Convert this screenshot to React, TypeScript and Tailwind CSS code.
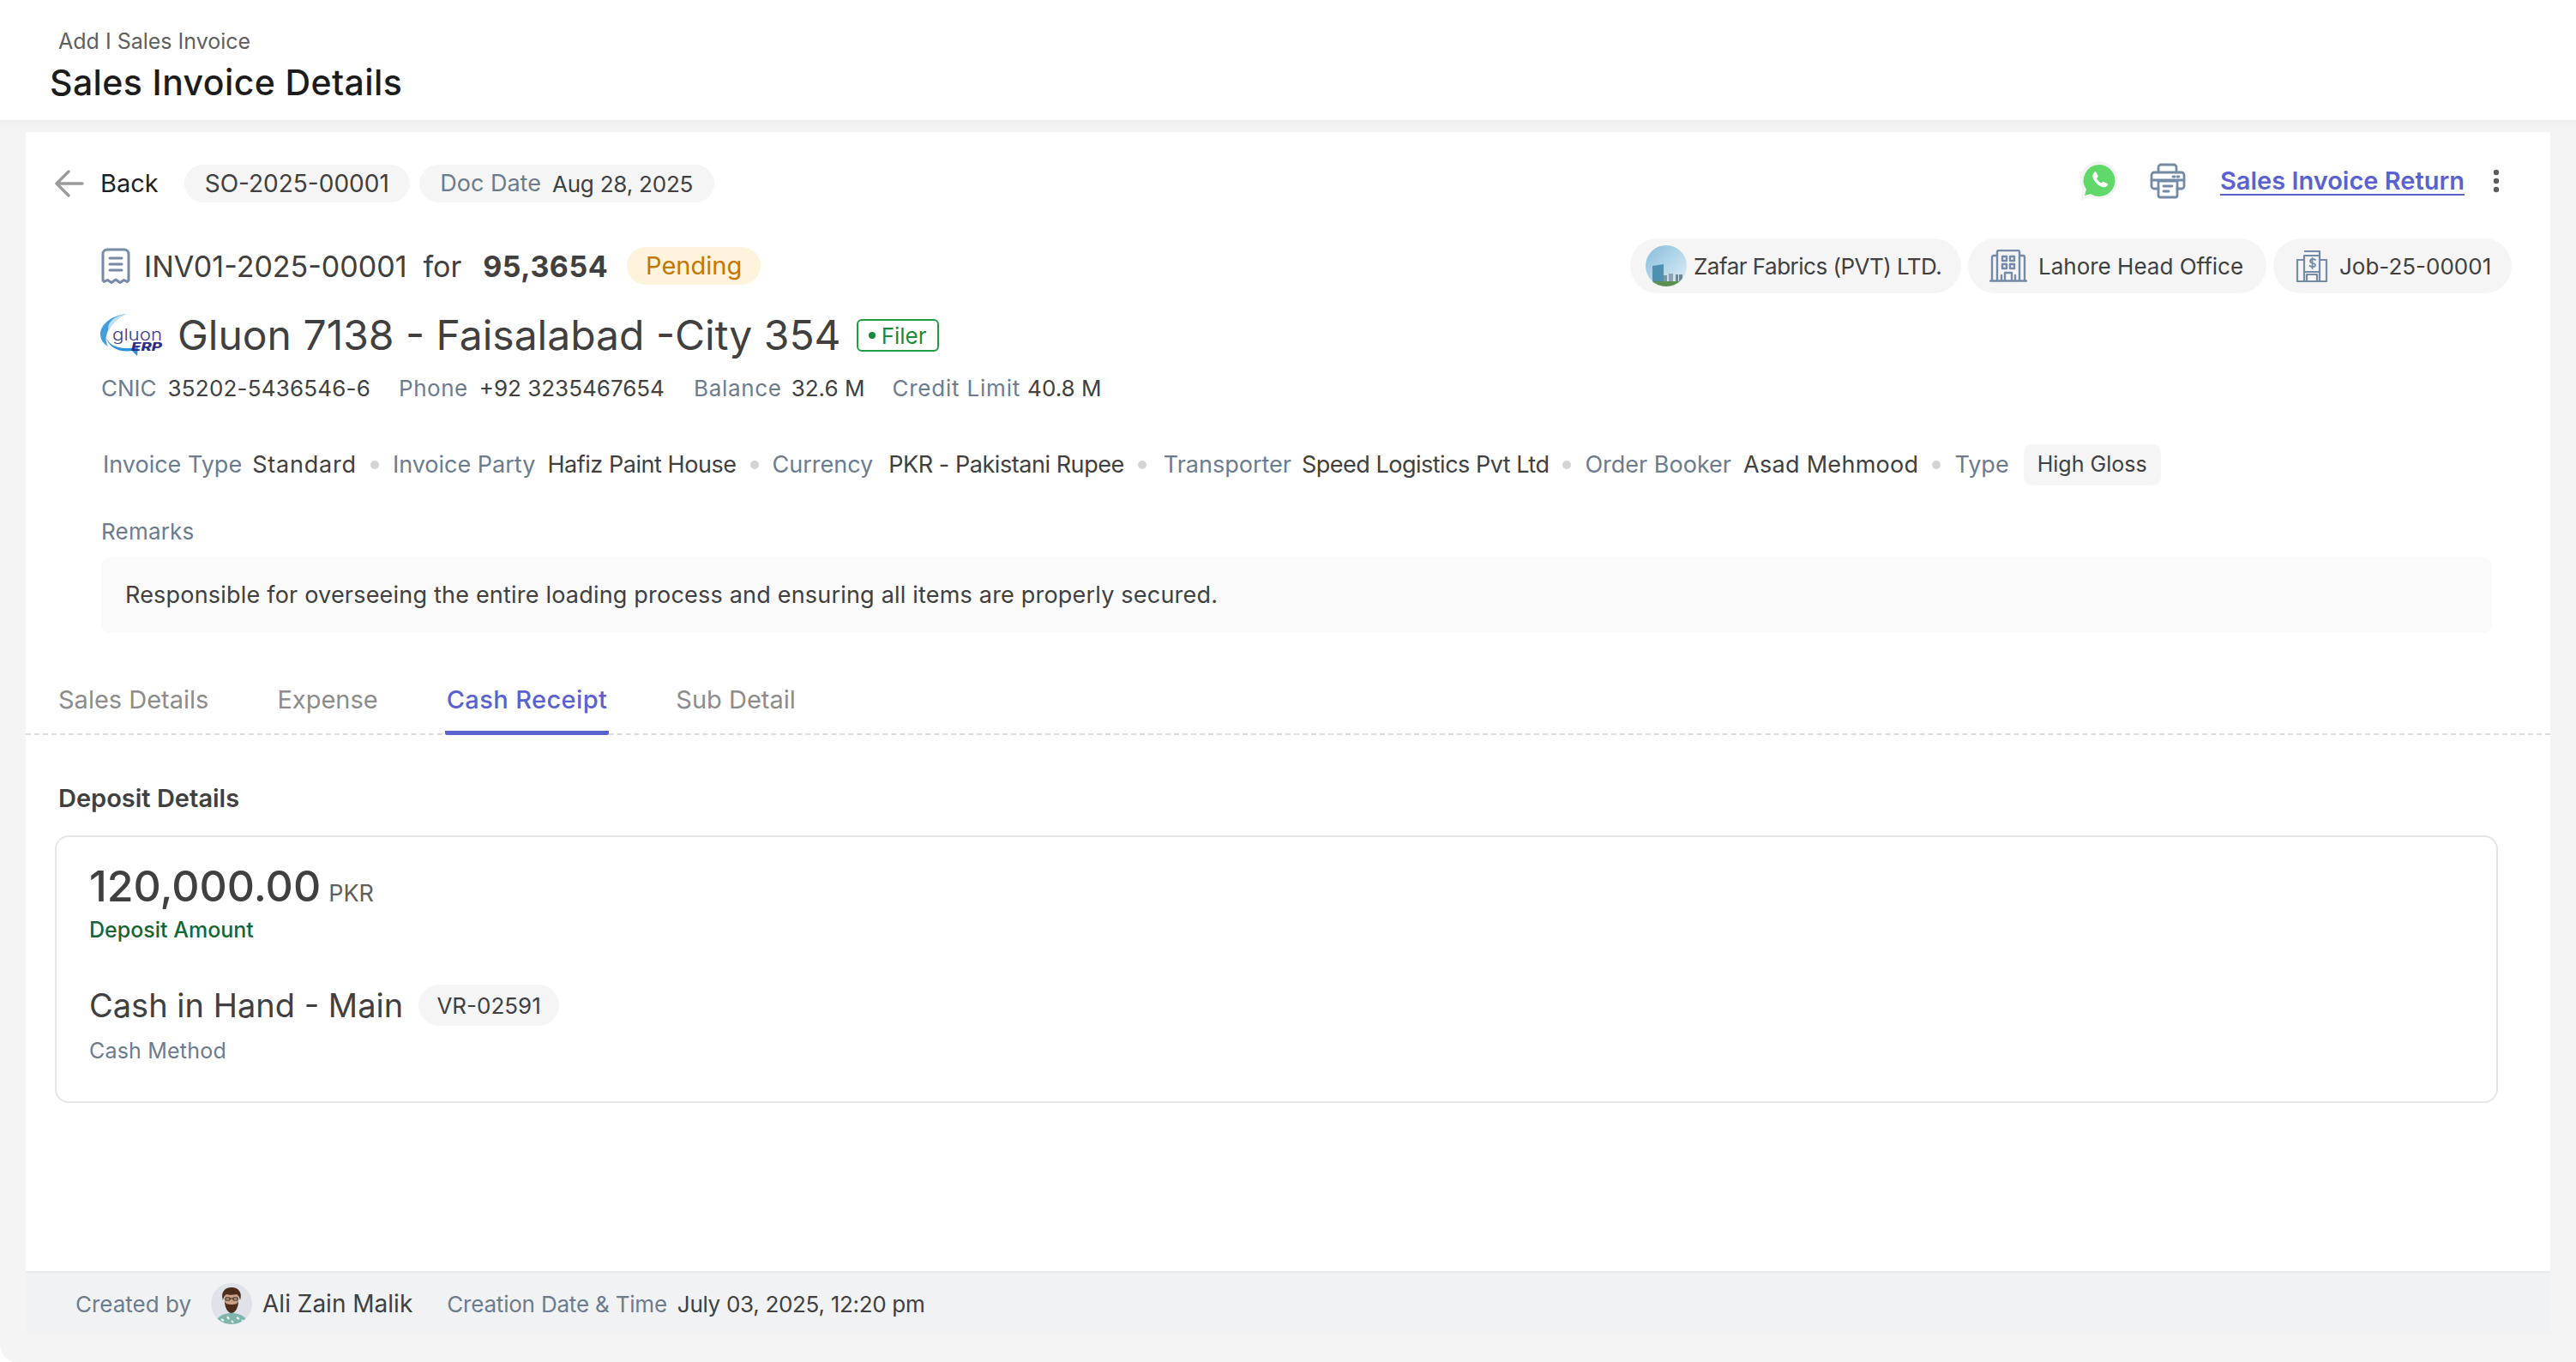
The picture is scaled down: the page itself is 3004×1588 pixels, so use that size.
const FONT = 'font-["Inter","Noto_Sans",sans-serif]'

function ArrowIcon() {
  return (
    <svg width="34" height="32" viewBox="0 0 34 32" fill="none" stroke="#9b9b9b" strokeWidth="3.4" strokeLinecap="round" strokeLinejoin="round">
      <path d="M2 16h30M16 2 2 16l14 14" />
    </svg>
  )
}

function ReceiptIcon() {
  return (
    <svg width="34" height="42" viewBox="0 0 34 42" fill="none" stroke="#748aa6" strokeWidth="3" strokeLinecap="round" strokeLinejoin="round">
      <path d="M7 2h20a5 5 0 0 1 5 5v31l-1.500 1.500-4-2-4.500 3-5-3.500-5 3.500-4.500-3-4 2L2 38V7a5 5 0 0 1 5-5Z" />
      <path d="M10 12h14M10 19h14M10 26h14" />
    </svg>
  )
}

function GluonLogo() {
  return (
    <svg width="74" height="50" viewBox="0 0 74 50">
      <path d="M30 0C13 2 0 12 0 24c0 6 4 11 9 14-3-5-3-11-1-16C11 12 20 4 30 0Z" fill="#3f9fe0" />
      <path d="M30 0C22 1 14 5 10 12c-1 3-1 5 0 8 3-8 11-15 20-20Z" fill="#bde2f8" />
      <path d="M6 26c3 9 12 14 24 14 5 0 10-.5 14-1.500l-1 10.500-6-6c-15 2-27-3-31-17Z" fill="#2b92dc" />
      <text x="14" y="31" fontSize="18.500" fontWeight="300" fill="#3d3a8c" fontFamily="Inter, sans-serif" textLength="58" lengthAdjust="spacingAndGlyphs">gluon</text>
      <text x="36" y="43" fontSize="13" fontWeight="800" fontStyle="italic" fill="#2f2a8a" fontFamily="Inter, sans-serif" textLength="36" lengthAdjust="spacingAndGlyphs">ERP</text>
    </svg>
  )
}

function WhatsappIcon() {
  return (
    <svg width="44" height="46" viewBox="0 0 44 46">
      <path d="M22 0a22 22 0 0 1 0 44c-4 0-8-1-11-3L0 46l3-12A22 22 0 0 1 22 0Z" fill="#f3f3f3" />
      <path d="M22 4a18.500 18.500 0 0 1 0 37c-3.500 0-7-1-10-3l-7 2 2-7A18.500 18.500 0 0 1 22 4Z" fill="#60d86a" />
      <path d="M16 13c1-1 2-1 2.500 0l2 4c.3.600.2 1.200-.3 1.700l-1.200 1.300c1 2.300 3 4.300 5.500 5.500l1.300-1.300c.5-.5 1.100-.6 1.700-.3l3.800 2c1 .5 1 1.500.2 2.500-1.500 1.800-3.800 2.300-6 1.500-5-1.800-9-5.800-10.800-10.500-.8-2.300-.2-4.700 1.300-6.400Z" fill="#fff" />
    </svg>
  )
}

function PrinterIcon() {
  return (
    <svg width="42" height="42" viewBox="0 0 42 42" fill="none" stroke="#748aa6" strokeWidth="2.800" strokeLinecap="round" strokeLinejoin="round">
      <path d="M10 11V5a3 3 0 0 1 3-3h15a3 3 0 0 1 3 3v6" />
      <path d="M10 30H5a3 3 0 0 1-3-3V14a3 3 0 0 1 3-3h32a3 3 0 0 1 3 3v13a3 3 0 0 1-3 3h-5" />
      <path d="M2 20h38M27 16h2M32 16h2" />
      <path d="M10 21h22v17a2 2 0 0 1-2 2H12a2 2 0 0 1-2-2V21ZM16 27h10M16 33h6" />
    </svg>
  )
}

function DotsIcon() {
  return (
    <svg width="10" height="28" viewBox="0 0 10 28" fill="#5c5c5c">
      <circle cx="5" cy="4" r="3.200" />
      <circle cx="5" cy="14" r="3.200" />
      <circle cx="5" cy="24" r="3.200" />
    </svg>
  )
}

function CompanyPic() {
  return (
    <svg width="48" height="48" viewBox="0 0 48 48">
      <defs>
        <linearGradient id="sky" x1="0" y1="0" x2="1" y2="1">
          <stop offset="0" stopColor="#85bcdc" />
          <stop offset="1" stopColor="#e2f0f6" />
        </linearGradient>
        <clipPath id="pic">
          <circle cx="24" cy="24" r="24" />
        </clipPath>
      </defs>
      <g clipPath="url(#pic)">
        <rect width="48" height="48" fill="url(#sky)" />
        <path d="M8 24l13-2v22H8Z" fill="#4f8fb0" />
        <path d="M21 35h4v9h-4Z" fill="#7d95a3" />
        <path d="M27 33h5v11h-5Z" fill="#8ea3ad" />
        <path d="M35 34h3v10h-3ZM39 34h4v10h-4Z" fill="#6f8894" />
        <rect y="42" width="48" height="6" fill="#5a8f4e" />
      </g>
    </svg>
  )
}

function OfficeIcon() {
  return (
    <svg width="44" height="38" viewBox="0 0 44 38" fill="none" stroke="#748aa6" strokeWidth="2.400" strokeLinejoin="round" strokeLinecap="round">
      <path d="M9 36V3a2 2 0 0 1 2-2h22a2 2 0 0 1 2 2v33" />
      <path d="M9 7H5a2 2 0 0 0-2 2v27M35 7h4a2 2 0 0 1 2 2v27M1 36.500h42" />
      <path d="M15 8h5v5h-5ZM24 8h5v5h-5ZM15 17h5v5h-5ZM24 17h5v5h-5ZM18 36v-9h8v9M14 30v6M30 30v6" />
    </svg>
  )
}

function BankIcon() {
  return (
    <svg width="38" height="38" viewBox="0 0 38 38" fill="none" stroke="#748aa6" strokeWidth="2.200" strokeLinejoin="round">
      <path d="M10 37V7h18v30M10 2h18v5M10 12H2v25M28 12h8v25M1 37h36M13 37v-8h12v8M10 26h18" />
      <path d="M23 12c-1-1-6-1.500-6 1.500s6 1.500 6 4.500-5 2.500-6.500 1M19.500 10v12" strokeWidth="1.800" strokeLinecap="round" />
    </svg>
  )
}

function UserPic() {
  return (
    <svg width="48" height="48" viewBox="0 0 48 48">
      <defs>
        <clipPath id="user">
          <circle cx="24" cy="24" r="24" />
        </clipPath>
      </defs>
      <g clipPath="url(#user)">
        <rect width="48" height="48" fill="#dfe2e6" />
        <path d="M5 48c1-8 8-13 19-13s18 5 19 13Z" fill="#7fb5ad" />
        <path d="M12 42l3 2M19 39l2 3M30 40l3 2M36 43l2 2M24 44l2 2" stroke="#e8f0ea" strokeWidth="2.400" />
        <ellipse cx="24" cy="18" rx="8.500" ry="12" fill="#c9a083" />
        <path d="M14 20c-3-9 2-15 10-15s13 6 10 15c-1-4-2-6-4-7-4 1-9 1-12 0-2 1-3 3-4 7Z" fill="#4a2d1c" />
        <path d="M16 21c0 8 4 14 8 14s8-6 8-14c-1 3-3 4-8 4s-7-1-8-4Z" fill="#4a2d1c" />
        <path d="M17 17h5v3h-5ZM26 17h5v3h-5ZM22 18h4" fill="none" stroke="#33291f" strokeWidth="1" />
      </g>
    </svg>
  )
}

function Pill({ className, children }: { className: string; children: React.ReactNode }) {
  return <div className={`flex items-center bg-[#f5f5f5] rounded-full whitespace-nowrap ${className}`}>{children}</div>
}

function Label({ className, children }: { className?: string; children: React.ReactNode }) {
  return <span className={`text-[#6b7c8f] whitespace-nowrap ${className ?? ''}`}>{children}</span>
}

function Value({ className, children }: { className?: string; children: React.ReactNode }) {
  return <span className={`text-[#404040] whitespace-nowrap ${className ?? ''}`}>{children}</span>
}

function Dot() {
  return <span className="w-[10px] h-[10px] rounded-full bg-[#d4d4d4] mx-[16px] shrink-0" />
}

const tabs = ['Sales Details', 'Expense', 'Cash Receipt', 'Sub Detail']

export default function App() {
  return (
    <div className={`w-[3004px] h-[1588px] bg-white flex flex-col overflow-hidden ${FONT}`}>
      {/* Page header */}
      <div className="h-[140px] shrink-0 bg-white pl-[58px] pt-[31px]">
        <div className="pl-[10px] text-[25px] leading-[34px] text-[#5f5f5f]">Add I Sales Invoice</div>
        <div className="text-[41px] leading-[50px] tracking-[0.4px] font-medium text-[#1c1c1c] mt-[6px]">Sales Invoice Details</div>
      </div>

      <div className="flex-1 bg-[#f4f4f4] rounded-bl-[20px] px-[30px] pt-[14px] pb-[32px] flex flex-col min-h-0 shadow-[inset_0_8px_8px_-6px_rgba(0,0,0,0.04)]">
        <div className="flex-1 bg-white flex flex-col min-h-0">
          {/* Back row */}
          <div className="h-[44px] mt-[38px] pl-[34px] pr-[58px] flex items-center justify-between">
            <div className="flex items-center">
              <ArrowIcon />
              <span className="ml-[19px] text-[29px] text-[#1f1f1f]">Back</span>
              <Pill className="ml-[30px] h-[44px] w-[263px] justify-center text-[28px] text-[#404040]">SO-2025-00001</Pill>
              <Pill className="ml-[11px] h-[44px] w-[344px] justify-center gap-[13px] text-[27px]">
                <Label>Doc Date</Label>
                <Value className="text-[26px] tracking-[-0.2px]">Aug 28, 2025</Value>
              </Pill>
            </div>
            <div className="flex items-center pb-[6px]">
              <WhatsappIcon />
              <span className="ml-[37px]"><PrinterIcon /></span>
              <a className="ml-[40px] text-[29px] font-semibold text-[#5a62d1] underline underline-offset-[5px]">Sales Invoice Return</a>
              <span className="ml-[32px]"><DotsIcon /></span>
            </div>
          </div>

          {/* Invoice row with entity chips */}
          <div className="h-[64px] mt-[42px] pl-[88px] pr-[45px] flex items-center justify-between">
            <div className="flex items-center">
              <ReceiptIcon />
              <span className="ml-[16px] text-[34px] text-[#404040]">INV01-2025-00001</span>
              <span className="ml-[19px] text-[34px] text-[#404040]">for</span>
              <span className="ml-[25px] text-[34px] tracking-[0.5px] font-bold text-[#404040]">95,3654</span>
              <span className="ml-[22px] h-[44px] w-[156px] flex items-center justify-center rounded-full bg-[#fff3dc] text-[29px] text-[#c27803]">Pending</span>
            </div>
            <div className="flex items-center gap-[8px] text-[26px] text-[#404040]">
              <Pill className="h-[64px] w-[386px] pl-[18px] gap-[8px]">
                <CompanyPic />
                <span className="tracking-[-0.5px]">Zafar Fabrics (PVT) LTD.</span>
              </Pill>
              <Pill className="h-[64px] w-[348px] pl-[25px] gap-[13px]">
                <OfficeIcon />
                Lahore Head Office
              </Pill>
              <Pill className="h-[64px] w-[278px] pl-[26px] gap-[13px]">
                <BankIcon />
                Job-25-00001
              </Pill>
            </div>
          </div>

          {/* Customer */}
          <div className="h-[50px] mt-[24px] pl-[87px] flex items-center">
            <GluonLogo />
            <span className="ml-[16px] text-[48px] text-[#404040]">Gluon 7138 - Faisalabad -City 354</span>
            <span className="ml-[18px] h-[38px] w-[96px] flex items-center justify-center gap-[7px] rounded-[6px] border-2 border-[#1f9d45] text-[26px] text-[#1a8a3c]">
              <span className="w-[8px] h-[8px] rounded-full bg-[#1a8a3c]" />
              Filer
            </span>
          </div>

          <div className="h-[36px] mt-[18px] pl-[88px] flex items-center text-[26px]">
            <Label>CNIC</Label>
            <Value className="ml-[13px] tracking-[0.2px]">35202-5436546-6</Value>
            <Label className="ml-[33px] tracking-[0.5px]">Phone</Label>
            <Value className="ml-[13px]">+92 3235467654</Value>
            <Label className="ml-[34px] tracking-[0.7px]">Balance</Label>
            <Value className="ml-[11px]">32.6 M</Value>
            <Label className="ml-[32px] tracking-[0.8px]">Credit Limit</Label>
            <Value className="ml-[8px]">40.8 M</Value>
          </div>

          {/* Meta row */}
          <div className="h-[48px] mt-[48px] pl-[90px] flex items-center text-[27px]">
            <Label>Invoice Type</Label>
            <Value className="ml-[12px] tracking-[0.8px]">Standard</Value>
            <Dot />
            <Label>Invoice Party</Label>
            <Value className="ml-[14px] tracking-[-0.45px]">Hafiz Paint House</Value>
            <Dot />
            <Label>Currency</Label>
            <Value className="ml-[18px] tracking-[-0.45px]">PKR - Pakistani Rupee</Value>
            <Dot />
            <Label className="ml-[4px]">Transporter</Label>
            <Value className="ml-[12px] tracking-[-0.5px]">Speed Logistics Pvt Ltd</Value>
            <Dot />
            <Label>Order Booker</Label>
            <Value className="ml-[14px] tracking-[0.3px]">Asad Mehmood</Value>
            <Dot />
            <Label>Type</Label>
            <span className="ml-[17px] h-[48px] w-[160px] flex items-center justify-center rounded-[10px] bg-[#f5f5f5] text-[25px] text-[#404040]">High Gloss</span>
          </div>

          <div className="mt-[35px] ml-[88px] h-[36px] flex items-center text-[26px]">
            <Label className="tracking-[0.2px]">Remarks</Label>
          </div>
          <div className="mt-[13px] ml-[88px] mr-[68px] h-[88px] rounded-[10px] bg-[#fafafa] flex items-center pl-[28px] text-[27px] tracking-[0.2px] text-[#404040]">
            Responsible for overseeing the entire loading process and ensuring all items are properly secured.
          </div>

          {/* Tabs */}
          <div className="mt-[42px] h-[77px] pl-[36px] flex gap-[76px] border-b-2 border-dashed border-[#dcdcdc] text-[29px]">
            {tabs.map((tab) => (
              <div
                key={tab}
                className={`h-[77px] px-[2px] pt-[18px] leading-[36px] rounded-b-[2px] border-b-[5px] ${
                  tab === 'Cash Receipt' ? 'border-[#5a62d1] text-[#5a62d1] font-medium tracking-[0.4px]' : 'border-transparent text-[#8c8c8c]'
                }`}
              >
                {tab}
              </div>
            ))}
          </div>

          <div className="mt-[56px] ml-[38px] text-[29px] leading-[36px] font-semibold text-[#404040]">Deposit Details</div>

          {/* Deposit card */}
          <div className="mt-[25px] ml-[34px] mr-[61px] h-[312px] rounded-[16px] border-2 border-[#e5e5e5] pl-[38px] pt-[22px]">
            <div className="flex items-baseline h-[69px]">
              <span className="text-[50px] leading-[70px] font-medium text-[#404040]">120,000.00</span>
              <span className="ml-[9px] text-[27px] leading-[70px] text-[#5f5f5f]">PKR</span>
            </div>
            <div className="text-[25px] leading-[34px] font-medium text-[#166534]">Deposit Amount</div>
            <div className="mt-[47px] flex items-center h-[48px]">
              <span className="text-[38px] text-[#404040]">Cash in Hand - Main</span>
              <Pill className="ml-[18px] h-[48px] w-[164px] justify-center text-[26px] text-[#404040]">VR-02591</Pill>
            </div>
            <div className="mt-[12px] text-[25px] leading-[34px] tracking-[0.2px] text-[#6b7c8f]">Cash Method</div>
          </div>

          {/* Footer */}
          <div className="mt-auto h-[74px] shrink-0 bg-[#f1f2f4] border-t-2 border-[#e8eaed] pl-[58px] flex items-center">
            <Label className="text-[26px]">Created by</Label>
            <span className="ml-[23px]"><UserPic /></span>
            <span className="ml-[12px] text-[28px] text-[#404040]">Ali Zain Malik</span>
            <Label className="ml-[40px] text-[26px] tracking-[-0.2px]">Creation Date & Time</Label>
            <span className="ml-[12px] text-[26px] tracking-[-0.3px] text-[#404040]">July 03, 2025, 12:20 pm</span>
          </div>
        </div>
      </div>
    </div>
  )
}
